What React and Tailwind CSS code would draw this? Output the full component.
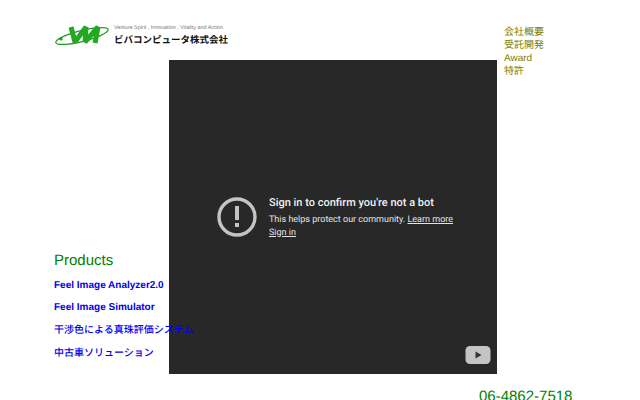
const navItems = ["会社概要", "受託開発", "Award", "特許"];
const products = [
  { name: "Feel Image Analyzer2.0", cls: "leading-[22px] font-bold" },
  { name: "Feel Image Simulator", cls: "leading-[22px] font-bold" },
  { name: "干渉色による真珠評価システム", cls: "leading-[23px] font-medium" },
  { name: "中古車ソリューション", cls: "leading-[24px] font-medium" },
];

const Logo = () => (
  <div className="flex items-start h-[24px]">
    <svg width="58" height="22" viewBox="0 0 58 22" className="shrink-0">
      <ellipse cx="28" cy="11" rx="27" ry="5.5" fill="none" stroke="#1f9a1f" strokeWidth="1.2" transform="rotate(-14 28 11)" />
      <circle cx="7" cy="14" r="1.6" fill="#1f9a1f" />
      <path d="M17 2l4 15L32 2l-1 15L44 2l-3 16" fill="none" stroke="#22a822" strokeWidth="5" strokeLinejoin="bevel" />
    </svg>
    <div className="ml-[2px] flex flex-col">
      <span className="text-[5.4px] leading-[7px] text-[#777] whitespace-nowrap">
        Venture Spirit , Innovation , Vitality and Action.
      </span>
      <span className="mt-[3px] text-[9.5px] leading-[12px] font-bold text-[#111] whitespace-nowrap">
        ビバコンピュータ株式会社
      </span>
    </div>
  </div>
);

const BlockedVideo = () => (
  <div className="absolute left-[169px] top-[60px] w-[328px] h-[314px] bg-[#282828] font-['Roboto',sans-serif]">
    <div className="flex items-center h-full pl-[48px]">
      <svg width="40" height="40" viewBox="0 0 40 40" className="shrink-0">
        <circle cx="20" cy="20" r="18" fill="none" stroke="#c4c4c4" strokeWidth="3.4" />
        <rect x="18" y="9" width="4" height="14" fill="#c4c4c4" />
        <rect x="18" y="26" width="4" height="4" fill="#c4c4c4" />
      </svg>
      <div className="ml-[12px] text-[#e4e4e4]">
        <div className="text-[11px] leading-[14px] font-medium text-[#f1f1f1]">Sign in to confirm you're not a bot</div>
        <div className="mt-[4px] text-[9px] leading-[13px]">
          This helps protect our community. <span className="underline">Learn more</span>
        </div>
        <div className="text-[9px] leading-[12px] underline">Sign in</div>
      </div>
    </div>
    <svg width="26" height="18" viewBox="0 0 26 18" className="absolute left-[296px] top-[286px]">
      <rect x="0.5" width="25" height="18" rx="4.5" fill="#c4c4c4" />
      <path d="M10.5 5.5v7l6-3.5z" fill="#333" />
    </svg>
  </div>
);

export default function App() {
  return (
    <div className="relative w-[640px] h-[400px] overflow-hidden bg-white [text-rendering:geometricPrecision] font-['Liberation_Sans','Noto_Sans_CJK_JP',sans-serif]">
      <BlockedVideo />
      <div className="relative flex flex-col h-full pl-[54px]">
        <div className="flex justify-between pt-[25px] pr-[96px]">
          <Logo />
          <ul className="mt-[1px] text-[10px] leading-[13px] text-[#808000] w-[40px]">
            {navItems.map((item) => (
              <li key={item}>{item}</li>
            ))}
          </ul>
        </div>
        <h2 className="mt-[173px] text-[15px] leading-[20px] text-[#008000]">Products</h2>
        <ul className="mt-[4px] text-[10px] text-[#0000ee] whitespace-nowrap">
          {products.map((p) => (
            <li key={p.name} className={p.cls}>{p.name}</li>
          ))}
        </ul>
        <div className="mt-auto -mb-[6px] pl-[425px] text-[15px] leading-[18px] text-[#008000]">06-4862-7518</div>
      </div>
    </div>
  );
}
